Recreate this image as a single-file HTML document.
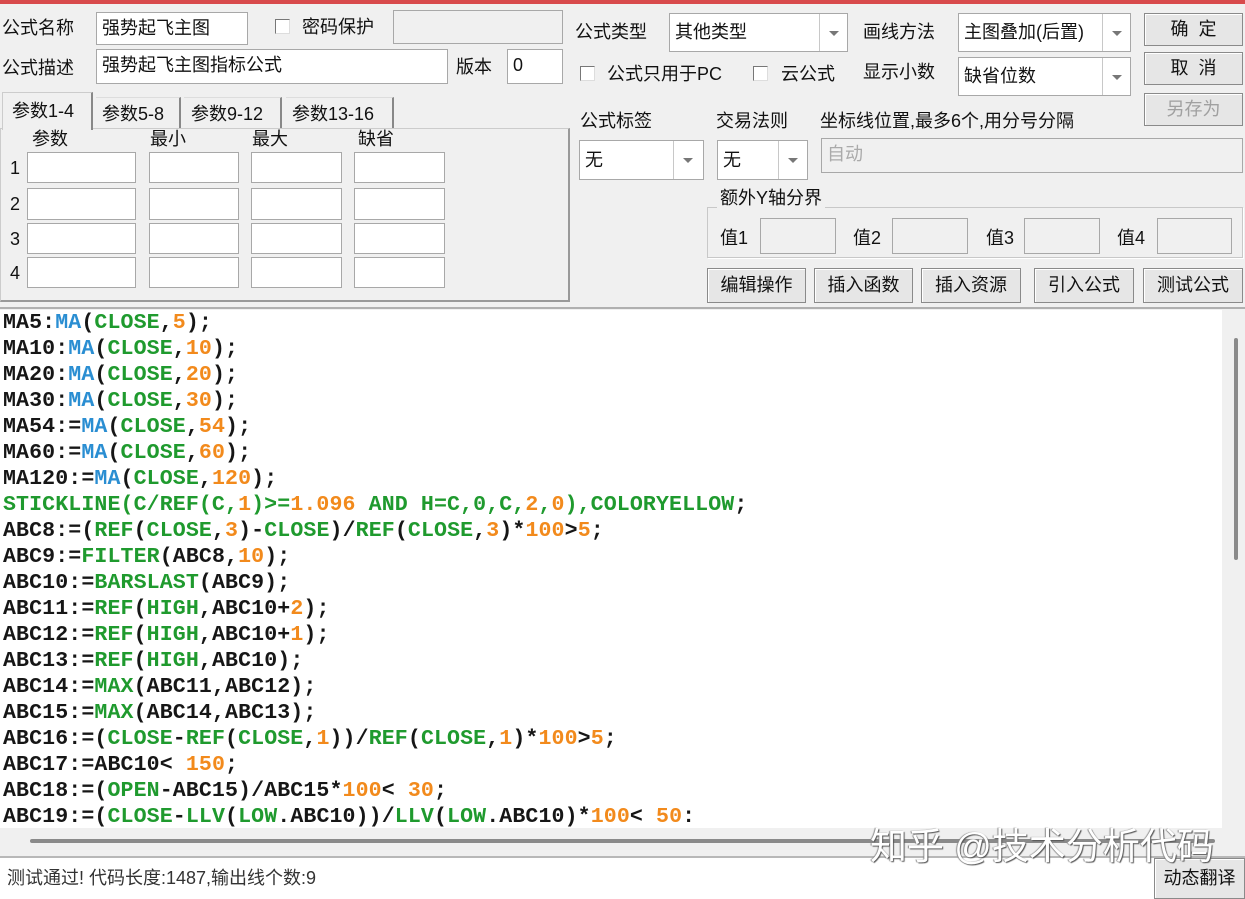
<!DOCTYPE html>
<html><head><meta charset="utf-8"><style>
*{box-sizing:border-box;margin:0;padding:0}
body{width:1245px;height:899px;background:#f0f0f0;position:relative;overflow:hidden;font-family:"Liberation Sans","Noto Sans CJK SC",sans-serif;font-size:18px;color:#111}
.a{position:absolute}
.lb{position:absolute;white-space:nowrap;line-height:22px}
.in{position:absolute;background:#fff;border:1px solid #a8a8a8;padding-left:5px;line-height:30px;white-space:nowrap}
.dis{background:#f0f0f0;color:#aaa}
.cb{position:absolute;width:15px;height:15px;background:#fff;border:1px solid #777;border-right-color:#ddd;border-bottom-color:#ddd}
.cmb{position:absolute;background:#fff;border:1px solid #a8a8a8;padding-left:5px;white-space:nowrap}
.cmb .dv{position:absolute;top:0;bottom:0;border-left:1px solid #c8c8c8;width:28px;right:0}
.cmb .dv:after{content:"";position:absolute;left:9px;top:50%;margin-top:-2px;border:5px solid transparent;border-top:5px solid #777;border-bottom:none}
.btn{position:absolute;background:#e6e6e6;border:1px solid #8a8a8a;box-shadow:inset 1px 1px 0 #fff;text-align:center;white-space:nowrap}
.code{position:absolute;left:0;top:310px;width:1222px;height:518px;background:#fff;font-family:"Liberation Mono",monospace;font-weight:bold;font-size:21.6px;line-height:26px;padding-left:3px;white-space:pre;overflow:hidden;color:#161616;letter-spacing:0.1px}
.b{color:#2a8ed2}.g{color:#1f9a2e}.o{color:#f28a1c}
</style></head><body>
<div class="a" style="left:0;top:0;width:1245px;height:4px;background:#d84a4c"></div>

<div class="lb" style="left:2px;top:17px">公式名称</div>
<div class="in" style="left:96px;top:12px;width:152px;height:33px">强势起飞主图</div>
<div class="cb" style="left:275px;top:19px"></div>
<div class="lb" style="left:302px;top:16px">密码保护</div>
<div class="in dis" style="left:393px;top:10px;width:170px;height:34px"></div>
<div class="lb" style="left:2px;top:57px">公式描述</div>
<div class="in" style="left:96px;top:49px;width:352px;height:35px">强势起飞主图指标公式</div>
<div class="lb" style="left:456px;top:56px">版本</div>
<div class="in" style="left:507px;top:49px;width:56px;height:35px">0</div>

<div class="a" style="left:0;top:128px;width:570px;height:174px;border:1px solid #ccc;border-right:2px solid #999;border-bottom:2px solid #999;background:#f0f0f0"></div>
<div class="a" style="left:2px;top:92px;width:91px;height:38px;background:#f0f0f0;border:1px solid #ccc;border-bottom:none;border-right:2px solid #888"></div>
<div class="lb" style="left:12px;top:100px">参数1-4</div>
<div class="a" style="left:96px;top:97px;width:85px;height:31px;border-right:2px solid #888;border-top:1px solid #ddd"></div>
<div class="lb" style="left:102px;top:103px">参数5-8</div>
<div class="a" style="left:184px;top:97px;width:98px;height:31px;border-right:2px solid #888;border-top:1px solid #ddd"></div>
<div class="lb" style="left:191px;top:103px">参数9-12</div>
<div class="a" style="left:286px;top:97px;width:108px;height:31px;border-right:2px solid #888;border-top:1px solid #ddd"></div>
<div class="lb" style="left:292px;top:103px">参数13-16</div>
<div class="lb" style="left:32px;top:128px">参数</div>
<div class="lb" style="left:150px;top:128px">最小</div>
<div class="lb" style="left:252px;top:128px">最大</div>
<div class="lb" style="left:358px;top:128px">缺省</div>
<div class="lb" style="left:10px;top:157px">1</div>
<div class="lb" style="left:10px;top:193px">2</div>
<div class="lb" style="left:10px;top:228px">3</div>
<div class="lb" style="left:10px;top:262px">4</div>
<div class="in" style="left:27px;top:152px;width:109px;height:31px"></div>
<div class="in" style="left:149px;top:152px;width:90px;height:31px"></div>
<div class="in" style="left:251px;top:152px;width:91px;height:31px"></div>
<div class="in" style="left:354px;top:152px;width:91px;height:31px"></div>
<div class="in" style="left:27px;top:188px;width:109px;height:32px"></div>
<div class="in" style="left:149px;top:188px;width:90px;height:32px"></div>
<div class="in" style="left:251px;top:188px;width:91px;height:32px"></div>
<div class="in" style="left:354px;top:188px;width:91px;height:32px"></div>
<div class="in" style="left:27px;top:223px;width:109px;height:31px"></div>
<div class="in" style="left:149px;top:223px;width:90px;height:31px"></div>
<div class="in" style="left:251px;top:223px;width:91px;height:31px"></div>
<div class="in" style="left:354px;top:223px;width:91px;height:31px"></div>
<div class="in" style="left:27px;top:257px;width:109px;height:31px"></div>
<div class="in" style="left:149px;top:257px;width:90px;height:31px"></div>
<div class="in" style="left:251px;top:257px;width:91px;height:31px"></div>
<div class="in" style="left:354px;top:257px;width:91px;height:31px"></div>

<div class="lb" style="left:575px;top:21px">公式类型</div>
<div class="cmb" style="left:669px;top:13px;width:179px;height:39px;line-height:37px">其他类型<div class="dv"></div></div>
<div class="lb" style="left:863px;top:21px">画线方法</div>
<div class="cmb" style="left:958px;top:13px;width:173px;height:39px;line-height:37px">主图叠加(后置)<div class="dv"></div></div>
<div class="btn" style="left:1144px;top:13px;width:99px;height:33px;line-height:31px">确&nbsp;&nbsp;定</div>
<div class="btn" style="left:1144px;top:52px;width:99px;height:33px;line-height:31px">取&nbsp;&nbsp;消</div>
<div class="btn" style="left:1144px;top:93px;width:99px;height:33px;line-height:31px;color:#a0a0a0">另存为</div>
<div class="cb" style="left:580px;top:66px"></div>
<div class="lb" style="left:607px;top:63px">公式只用于PC</div>
<div class="cb" style="left:753px;top:66px"></div>
<div class="lb" style="left:781px;top:63px">云公式</div>
<div class="lb" style="left:863px;top:61px">显示小数</div>
<div class="cmb" style="left:958px;top:57px;width:173px;height:39px;line-height:37px">缺省位数<div class="dv"></div></div>
<div class="lb" style="left:580px;top:110px">公式标签</div>
<div class="lb" style="left:716px;top:110px">交易法则</div>
<div class="lb" style="left:820px;top:110px">坐标线位置,最多6个,用分号分隔</div>
<div class="cmb" style="left:579px;top:140px;width:125px;height:40px;line-height:38px">无<div class="dv" style="width:30px"></div></div>
<div class="cmb" style="left:717px;top:140px;width:91px;height:40px;line-height:38px">无<div class="dv" style="width:29px"></div></div>
<div class="in dis" style="left:821px;top:138px;width:422px;height:35px">自动</div>
<div class="a" style="left:707px;top:207px;width:536px;height:51px;border:1px solid #c8c8c8;box-shadow:1px 1px 0 #fff"></div>
<div class="lb" style="left:717px;top:187px;background:#f0f0f0;padding:0 3px">额外Y轴分界</div>
<div class="lb" style="left:720px;top:227px">值1</div>
<div class="in dis" style="left:760px;top:218px;width:76px;height:36px"></div>
<div class="lb" style="left:853px;top:227px">值2</div>
<div class="in dis" style="left:892px;top:218px;width:76px;height:36px"></div>
<div class="lb" style="left:986px;top:227px">值3</div>
<div class="in dis" style="left:1024px;top:218px;width:76px;height:36px"></div>
<div class="lb" style="left:1117px;top:227px">值4</div>
<div class="in dis" style="left:1157px;top:218px;width:75px;height:36px"></div>
<div class="btn" style="left:707px;top:268px;width:99px;height:35px;line-height:33px">编辑操作</div>
<div class="btn" style="left:814px;top:268px;width:99px;height:35px;line-height:33px">插入函数</div>
<div class="btn" style="left:921px;top:268px;width:100px;height:35px;line-height:33px">插入资源</div>
<div class="btn" style="left:1034px;top:268px;width:100px;height:35px;line-height:33px">引入公式</div>
<div class="btn" style="left:1143px;top:268px;width:100px;height:35px;line-height:33px">测试公式</div>

<div class="a" style="left:0;top:307px;width:1245px;height:2px;background:#b0b0b0"></div>
<div class="code">MA5:<span class="b">MA</span>(<span class="g">CLOSE</span>,<span class="o">5</span>);
MA10:<span class="b">MA</span>(<span class="g">CLOSE</span>,<span class="o">10</span>);
MA20:<span class="b">MA</span>(<span class="g">CLOSE</span>,<span class="o">20</span>);
MA30:<span class="b">MA</span>(<span class="g">CLOSE</span>,<span class="o">30</span>);
MA54:=<span class="b">MA</span>(<span class="g">CLOSE</span>,<span class="o">54</span>);
MA60:=<span class="b">MA</span>(<span class="g">CLOSE</span>,<span class="o">60</span>);
MA120:=<span class="b">MA</span>(<span class="g">CLOSE</span>,<span class="o">120</span>);
<span class="g">STICKLINE(C/REF(C,<span class="o">1</span>)&gt;=<span class="o">1.096</span> AND H=C,0,C,<span class="o">2</span>,<span class="o">0</span>),COLORYELLOW</span>;
ABC8:=(<span class="g">REF</span>(<span class="g">CLOSE</span>,<span class="o">3</span>)-<span class="g">CLOSE</span>)/<span class="g">REF</span>(<span class="g">CLOSE</span>,<span class="o">3</span>)*<span class="o">100</span>&gt;<span class="o">5</span>;
ABC9:=<span class="g">FILTER</span>(ABC8,<span class="o">10</span>);
ABC10:=<span class="g">BARSLAST</span>(ABC9);
ABC11:=<span class="g">REF</span>(<span class="g">HIGH</span>,ABC10+<span class="o">2</span>);
ABC12:=<span class="g">REF</span>(<span class="g">HIGH</span>,ABC10+<span class="o">1</span>);
ABC13:=<span class="g">REF</span>(<span class="g">HIGH</span>,ABC10);
ABC14:=<span class="g">MAX</span>(ABC11,ABC12);
ABC15:=<span class="g">MAX</span>(ABC14,ABC13);
ABC16:=(<span class="g">CLOSE</span>-<span class="g">REF</span>(<span class="g">CLOSE</span>,<span class="o">1</span>))/<span class="g">REF</span>(<span class="g">CLOSE</span>,<span class="o">1</span>)*<span class="o">100</span>&gt;<span class="o">5</span>;
ABC17:=ABC10&lt; <span class="o">150</span>;
ABC18:=(<span class="g">OPEN</span>-ABC15)/ABC15*<span class="o">100</span>&lt; <span class="o">30</span>;
ABC19:=(<span class="g">CLOSE</span>-<span class="g">LLV</span>(<span class="g">LOW</span>.ABC10))/<span class="g">LLV</span>(<span class="g">LOW</span>.ABC10)*<span class="o">100</span>&lt; <span class="o">50</span>:</div>
<div class="a" style="left:1222px;top:310px;width:23px;height:518px;background:#f0f0f0"></div>
<div class="a" style="left:1234px;top:338px;width:4px;height:222px;background:#8a8a8a;border-radius:2px"></div>
<div class="a" style="left:30px;top:839px;width:1185px;height:4px;background:#8a8a8a;border-radius:2px"></div>
<div class="a" style="left:0;top:856px;width:1245px;height:2px;background:#b8b8b8"></div>
<div class="a" style="left:0;top:858px;width:1245px;height:41px;background:#fff"></div>
<div class="lb" style="left:7px;top:867px;color:#333">测试通过! 代码长度:1487,输出线个数:9</div>
<div class="btn" style="left:1154px;top:858px;width:91px;height:41px;line-height:38px">动态翻译</div>
<div class="lb" style="left:870px;top:825px;font-size:37px;line-height:44px;color:#fff;text-shadow:1px 1px 1px #555,-1px 0 1px #888">知乎 @技术分析代码</div>
</body></html>
